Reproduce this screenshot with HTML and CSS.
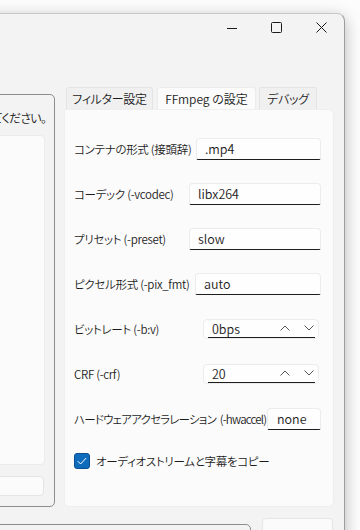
FILE: index.html
```html
<!DOCTYPE html>
<html lang="ja">
<head>
    <meta charset="utf-8">
    <title>FFmpeg</title>
    <link rel="stylesheet" href="styles.css">
</head>
<body>
    <div class="window">
        <div class="titlebar">
            <span class="cap-btn">
                <svg width="10" height="10" viewBox="0 0 10 10"><path d="M0 5.5h10" stroke="#1a1a1a" stroke-width="1"/></svg>
            </span>
            <span class="cap-btn">
                <svg width="11" height="11" viewBox="0 0 11 11"><rect x="0.5" y="0.5" width="10" height="10" rx="1" fill="none" stroke="#1a1a1a" stroke-width="1"/></svg>
            </span>
            <span class="cap-btn">
                <svg width="11" height="11" viewBox="0 0 11 11"><path d="M0.5 0.5l10 10M10.5 0.5l-10 10" stroke="#1a1a1a" stroke-width="1"/></svg>
            </span>
        </div>

        <div class="main">
            <div class="left">
                <div class="group">
                    <div class="hint"><span>てください。</span></div>
                    <div class="file-list"></div>
                    <div class="path-box"></div>
                </div>
            </div>

            <div class="right">
                <div class="tabs">
                    <div class="tab tab-filter">フィルター設定</div>
                    <div class="tab tab-ffmpeg active">FFmpeg の設定</div>
                    <div class="tab tab-debug">デバッグ</div>
                </div>
                <div class="panel">
                    <div class="row">
                        <span class="label">コンテナの形式 (接頭辞)</span>
                        <div class="textbox w125">.mp4</div>
                    </div>
                    <div class="row">
                        <span class="label">コーデック (-vcodec)</span>
                        <div class="textbox w132">libx264</div>
                    </div>
                    <div class="row">
                        <span class="label">プリセット (-preset)</span>
                        <div class="textbox w132">slow</div>
                    </div>
                    <div class="row">
                        <span class="label">ピクセル形式 (-pix_fmt)</span>
                        <div class="textbox w126">auto</div>
                    </div>
                    <div class="row">
                        <span class="label">ビットレート (-b:v)</span>
                        <div class="spin">
                            <div class="spin-inner">
                                <span class="spin-value">0bps</span>
                                <svg class="chev" width="10" height="6" viewBox="0 0 10 6"><path d="M0.5 5.5l4.5-4.5 4.5 4.5" fill="none" stroke="#555" stroke-width="1"/></svg>
                                <svg class="chev" width="10" height="6" viewBox="0 0 10 6"><path d="M0.5 0.5l4.5 4.5 4.5-4.5" fill="none" stroke="#555" stroke-width="1"/></svg>
                            </div>
                        </div>
                    </div>
                    <div class="row">
                        <span class="label">CRF (-crf)</span>
                        <div class="spin">
                            <div class="spin-inner">
                                <span class="spin-value">20</span>
                                <svg class="chev" width="10" height="6" viewBox="0 0 10 6"><path d="M0.5 5.5l4.5-4.5 4.5 4.5" fill="none" stroke="#555" stroke-width="1"/></svg>
                                <svg class="chev" width="10" height="6" viewBox="0 0 10 6"><path d="M0.5 0.5l4.5 4.5 4.5-4.5" fill="none" stroke="#555" stroke-width="1"/></svg>
                            </div>
                        </div>
                    </div>
                    <div class="row">
                        <span class="label label-long">ハードウェアアクセラレーション (-hwaccel)</span>
                        <div class="textbox w54">none</div>
                    </div>
                    <div class="check-row">
                        <span class="checkbox">
                            <svg width="10" height="8" viewBox="0 0 10 8"><path d="M0.8 4.2l2.8 2.8 5.6-6" fill="none" stroke="#fff" stroke-width="1"/></svg>
                        </span>
                        <span class="label">オーディオストリームと字幕をコピー</span>
                    </div>
                </div>
            </div>
        </div>

        <div class="bottom">
            <div class="progress"></div>
            <div class="run-btn"></div>
        </div>
    </div>
</body>
</html>
```

FILE: styles.css
```css
html, body {
    margin: 0;
    height: 100%;
    overflow: hidden;
}
body {
    background-color: #fcfcfc;
    font-family: "Noto Sans CJK JP", "Noto Sans", sans-serif;
    font-size: 11.5px;
    font-weight: 350;
    color: #1b1b1b;
    font-feature-settings: "palt";
}
.window {
    margin: 13px 15px 0 -100px;
    height: 560px;
    background-color: #f3f3f3;
    border: 1px solid #c9c9c9;
    border-right-color: #9d9d9d;
    border-radius: 0 8px 0 0;
    box-shadow: 0 4px 16px rgba(0, 0, 0, 0.28);
}
.titlebar {
    height: 27px;
    display: flex;
    justify-content: flex-end;
}
.cap-btn {
    width: 45px;
    display: flex;
    align-items: center;
    justify-content: center;
}
.main {
    display: flex;
    gap: 9px;
    padding: 46px 10px 0 10px;
}
.left {
    flex: 1;
    min-width: 0;
    padding-top: 7px;
}
.group {
    height: 413px;
    box-sizing: border-box;
    border: 1px solid #8d8d8d;
    border-radius: 5px;
    padding: 14px 9px 10px 10px;
    display: flex;
    flex-direction: column;
}
.hint {
    display: flex;
    justify-content: flex-end;
    white-space: nowrap;
    height: 18px;
    line-height: 18px;
    font-size: 12px;
    letter-spacing: -0.8px;
    margin-right: -1px;
}
.file-list {
    margin-top: 8px;
    height: 331px;
    background-color: #fbfbfb;
    border: 1px solid #ececec;
    border-radius: 4px;
}
.path-box {
    margin-top: 11px;
    margin-right: 1px;
    height: 18px;
    background-color: #fbfbfb;
    border: 1px solid #e4e4e4;
    border-radius: 4px;
}
.right {
    width: 270px;
    flex: none;
}
.tabs {
    display: flex;
    height: 22px;
    padding-left: 2px;
}
.tab {
    box-sizing: border-box;
    height: 22px;
    background-color: #f0f0f0;
    border: 1px solid #e4e4e4;
    border-bottom: none;
    border-radius: 3px 3px 0 0;
    text-align: center;
    line-height: 22px;
    font-size: 12px;
    letter-spacing: -0.3px;
}
.tab.active {
    background-color: #fbfbfb;
    border-color: #ececec;
}
.tab-filter {
    width: 87px;
}
.tab-ffmpeg {
    width: 99px;
    margin-left: 4px;
    letter-spacing: 0;
}
.tab-debug {
    width: 58px;
    margin-left: 3px;
}
.panel {
    height: 398px;
    box-sizing: border-box;
    background-color: #fbfbfb;
    border: 1px solid #efefef;
    border-radius: 2px 5px 5px 5px;
    padding: 16px 12px 0 9px;
}
.row {
    height: 45px;
    display: flex;
    align-items: center;
    justify-content: space-between;
}
.label {
    white-space: nowrap;
    letter-spacing: -0.3px;
}
.label-long {
    letter-spacing: -0.8px;
    word-spacing: 2px;
}
.textbox {
    box-sizing: border-box;
    height: 22px;
    padding-left: 8px;
    line-height: 20px;
    font-size: 12.5px;
    background-color: #fefefe;
    border: 1px solid #ececec;
    border-bottom: 1px solid #1e1e1e;
    border-radius: 4px 4px 2px 2px;
}
.w125 {
    width: 125px;
}
.w132 {
    width: 132px;
}
.w126 {
    width: 126px;
}
.w54 {
    width: 54px;
    padding-left: 9px;
}
.spin {
    box-sizing: border-box;
    width: 116px;
    height: 20px;
    margin-right: 2px;
    padding: 0 3px 0 4px;
    background-color: #fefefe;
    border: 1px solid #ececec;
    border-radius: 4px;
}
.spin-inner {
    box-sizing: border-box;
    height: 100%;
    display: flex;
    align-items: center;
    padding-left: 4px;
    border-bottom: 1px solid #1e1e1e;
    font-size: 12.5px;
}
.spin-value {
    flex: 1;
}
.chev {
    margin-right: 5px;
}
.chev + .chev {
    margin-left: 9px;
    margin-right: 1px;
}
.check-row {
    display: flex;
    align-items: center;
    gap: 6px;
    height: 40px;
}
.checkbox {
    box-sizing: border-box;
    width: 16px;
    height: 16px;
    border-radius: 3px;
    background-color: #0f6cbd;
    border: 1px solid #0b4f8f;
    display: flex;
    align-items: center;
    justify-content: center;
}
.bottom {
    display: flex;
    align-items: flex-start;
    gap: 11px;
    padding: 11px 11px 0 10px;
}
.progress {
    flex: 1;
    height: 22px;
    margin-top: 6px;
    border: 1px solid #8d8d8d;
    border-radius: 5px;
}
.run-btn {
    width: 69px;
    height: 30px;
    background-color: #fbfbfb;
    border: 1px solid #e6e6e6;
    border-radius: 4px;
}
```
